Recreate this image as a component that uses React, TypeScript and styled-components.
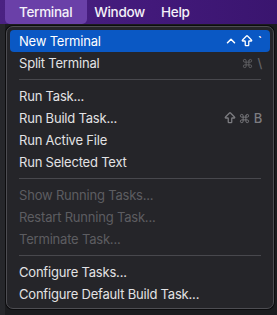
import React from 'react';
import styled, { createGlobalStyle } from 'styled-components';
import { ArrowBigUp, ChevronUp, Command } from 'lucide-react';

const GlobalStyle = createGlobalStyle`
  html, body {
    margin: 0;
    padding: 0;
    background: #1b1c1f;
  }
  body {
    font-family: Inter, "Noto Sans", "DejaVu Sans", sans-serif;
    -webkit-font-smoothing: antialiased;
  }
`;

const Page = styled.div`
  width: 277px;
  height: 315px;
  overflow: hidden;
  display: flex;
  flex-direction: column;
  background: #1b1c1f;
`;

const MenuBar = styled.div`
  height: 24px;
  flex: none;
  display: flex;
  align-items: stretch;
  padding-left: 5px;
  background: linear-gradient(90deg, #4a2282 0%, #42197a 55%, #3a156f 100%);
`;

const MenuTitle = styled.div<{ $active?: boolean }>`
  display: flex;
  align-items: center;
  padding: ${(p) => (p.$active ? '0 15px 0 14px' : '0')};
  margin-right: ${(p) => (p.$active ? '7px' : '16px')};
  border-radius: 0 0 5px 5px;
  background: ${(p) => (p.$active ? '#6a40a8' : 'transparent')};
  color: #f4f1f8;
  font-size: 13.5px;
  font-weight: 500;
  letter-spacing: -0.3px;
`;

const Workspace = styled.div`
  flex: 1;
  display: flex;
  padding: 2px 3px 6px 6px;
  background: linear-gradient(90deg, #26272b 0px, #26272b 5px, #1b1c1f 5px);
`;

const Menu = styled.div`
  flex: 1;
  display: flex;
  flex-direction: column;
  padding: 3px 3px;
  border: 1px solid #4d4d52;
  border-radius: 7px;
  background: #252529;
  box-shadow: 0 0 0 1px #0d0d0f;
`;

const Item = styled.div<{ $selected?: boolean; $disabled?: boolean }>`
  height: 22px;
  flex: none;
  display: flex;
  align-items: center;
  justify-content: space-between;
  padding: 0 8px 0 9px;
  border-radius: 4px;
  background: ${(p) => (p.$selected ? '#0a58c4' : 'transparent')};
  color: ${(p) => (p.$disabled ? '#5d5d61' : p.$selected ? '#ffffff' : '#e2e2e4')};
  font-size: 13px;
  letter-spacing: -0.2px;
  white-space: nowrap;
`;

type Tone = 'bright' | 'dim' | 'mid';

const Shortcut = styled.span<{ $tone?: Tone }>`
  display: flex;
  align-items: center;
  gap: 2px;
  font-size: 13px;
  font-weight: 500;
  color: ${(p) =>
    p.$tone === 'bright' ? '#ffffff' : p.$tone === 'dim' ? '#626266' : '#7c7c80'};
`;

const KeyChar = styled.span`
  margin-left: 2px;
`;

const Separator = styled.div`
  height: 11px;
  flex: none;
  display: flex;
  align-items: center;
  padding: 0 9px;
  &::after {
    content: '';
    flex: 1;
    height: 1px;
    background: #48484d;
  }
`;

type Key = 'ctrl' | 'shift' | 'cmd' | string;

type Entry =
  | { label: string; keys?: Key[]; tone?: Tone; disabled?: boolean; selected?: boolean }
  | 'sep';

const entries: Entry[] = [
  { label: 'New Terminal', keys: ['ctrl', 'shift', '`'], tone: 'bright', selected: true },
  { label: 'Split Terminal', keys: ['cmd', '\\'], tone: 'dim' },
  'sep',
  { label: 'Run Task...' },
  { label: 'Run Build Task...', keys: ['shift', 'cmd', 'B'], tone: 'mid' },
  { label: 'Run Active File' },
  { label: 'Run Selected Text' },
  'sep',
  { label: 'Show Running Tasks...', disabled: true },
  { label: 'Restart Running Task...', disabled: true },
  { label: 'Terminate Task...', disabled: true },
  'sep',
  { label: 'Configure Tasks...' },
  { label: 'Configure Default Build Task...' },
];

function KeyGlyph({ k }: { k: Key }) {
  if (k === 'ctrl') return <ChevronUp size={14} strokeWidth={2.6} />;
  if (k === 'shift') return <ArrowBigUp size={14} strokeWidth={2.2} />;
  if (k === 'cmd') return <Command size={11} strokeWidth={2} />;
  return <KeyChar>{k}</KeyChar>;
}

export default function App() {
  return (
    <Page>
      <GlobalStyle />
      <MenuBar>
        <MenuTitle $active>Terminal</MenuTitle>
        <MenuTitle>Window</MenuTitle>
        <MenuTitle>Help</MenuTitle>
      </MenuBar>
      <Workspace>
        <Menu>
          {entries.map((e, i) =>
            e === 'sep' ? (
              <Separator key={i} />
            ) : (
              <Item key={i} $selected={e.selected} $disabled={e.disabled}>
                <span>{e.label}</span>
                {e.keys && (
                  <Shortcut $tone={e.tone}>
                    {e.keys.map((k, j) => (
                      <KeyGlyph key={j} k={k} />
                    ))}
                  </Shortcut>
                )}
              </Item>
            )
          )}
        </Menu>
      </Workspace>
    </Page>
  );
}
